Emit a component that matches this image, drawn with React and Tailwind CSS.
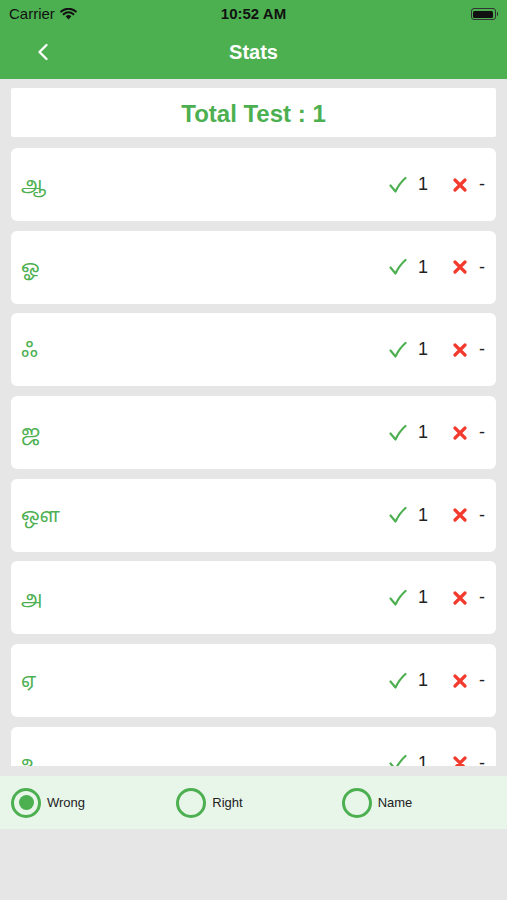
import React from 'react';
import { ChevronLeft } from 'lucide-react';

const letters = ['ஆ', 'ஓ', 'ஃ', 'ஜ', 'ஔ', 'அ', 'ஏ', 'உ'];

const tamil = { fontFamily: '"Noto Sans Tamil", "Lohit Tamil", "Noto Sans", sans-serif' };

function Check() {
    return (
        <svg width="18" height="18" viewBox="0 0 18 18" fill="none">
            <path d="M1.5 9.5 L6.5 15.5 C9 10 12 6 16.5 2" stroke="#4caf50" strokeWidth="2.2" strokeLinecap="round" strokeLinejoin="round" />
        </svg>
    );
}

function Cross() {
    return (
        <svg width="14" height="14" viewBox="0 0 14 14" fill="none">
            <path d="M2 2 L12 12 M12 2 L2 12" stroke="#f23a2f" strokeWidth="3.2" strokeLinecap="round" />
        </svg>
    );
}

function Radio({ label, checked }) {
    return (
        <div className="flex items-center gap-[6px] w-[166px]">
            <div className="w-[30px] h-[30px] rounded-full border-[3px] border-[#4caf50] flex items-center justify-center">
                {checked && <div className="w-[15px] h-[15px] rounded-full bg-[#4caf50]" />}
            </div>
            <span className="text-[13px] text-[#222]">{label}</span>
        </div>
    );
}

export default function App() {
    return (
        <div className="w-[507px] h-[900px] bg-[#e6e6e6] flex flex-col overflow-hidden" style={{ fontFamily: '"Liberation Sans", Arial, sans-serif' }}>
            {/* Header */}
            <div className="bg-[#4caf50] h-[79px] flex flex-col">
                <div className="h-[28px] flex items-center px-[9px] relative">
                    <div className="flex items-center gap-[5px] text-[15px] text-[#111]">
                        <span>Carrier</span>
                        <svg width="17" height="12" viewBox="0 0 17 12">
                            <path d="M8.5 11.5 L5.6 8.3 A4.2 4.2 0 0 1 11.4 8.3 Z" fill="#111" />
                            <path d="M3.6 6.2 A7.2 7.2 0 0 1 13.4 6.2" stroke="#111" strokeWidth="2" fill="none" strokeLinecap="round" />
                            <path d="M1.2 3.6 A10.8 10.8 0 0 1 15.8 3.6" stroke="#111" strokeWidth="2" fill="none" strokeLinecap="round" />
                        </svg>
                    </div>
                    <span className="absolute left-0 right-0 text-center text-[15px] font-bold text-[#111] pointer-events-none">10:52 AM</span>
                    <div className="ml-auto flex items-center">
                        <div className="w-[25px] h-[12px] rounded-[3px] border border-[#333] p-[1.5px]">
                            <div className="w-full h-full rounded-[1.5px] bg-[#111]" />
                        </div>
                        <div className="w-[1.5px] h-[4px] bg-[#333] ml-[1px] rounded-r" />
                    </div>
                </div>
                <div className="flex-1 flex items-center relative">
                    <ChevronLeft size={28} strokeWidth={2} className="text-white absolute left-[29px] top-[10px]" />
                    <span className="w-full text-center text-white text-[20px] font-bold pb-[3px]">Stats</span>
                </div>
            </div>

            {/* Total */}
            <div className="mx-[11px] mt-[9px] h-[49px] bg-white rounded-[2px] flex items-center justify-center">
                <span className="text-[24px] font-bold text-[#4caf50] mt-[2px]">Total Test : 1</span>
            </div>

            {/* List */}
            <div className="mx-[11px] mt-[11px] h-[618px] overflow-hidden flex flex-col gap-[9.7px]">
                {letters.map((l, i) => (
                    <div key={i} className="shrink-0 h-[73px] bg-white rounded-[6px] flex items-center pl-[10px] pr-[11px]">
                        <span className="text-[19px] text-[#4caf50] mt-[4px]" style={tamil}>{l}</span>
                        <div className="ml-auto flex items-center">
                            <Check />
                            <span className="text-[18px] text-[#222] ml-[11px] w-[35px]">1</span>
                            <Cross />
                            <span className="text-[18px] text-[#222] ml-[12px]">-</span>
                        </div>
                    </div>
                ))}
            </div>

            {/* Bottom radios */}
            <div className="mt-[10px] h-[53px] bg-[#e8f5e9] flex items-center pl-[11px]">
                <Radio label="Wrong" checked />
                <Radio label="Right" />
                <Radio label="Name" />
            </div>
        </div>
    );
}
